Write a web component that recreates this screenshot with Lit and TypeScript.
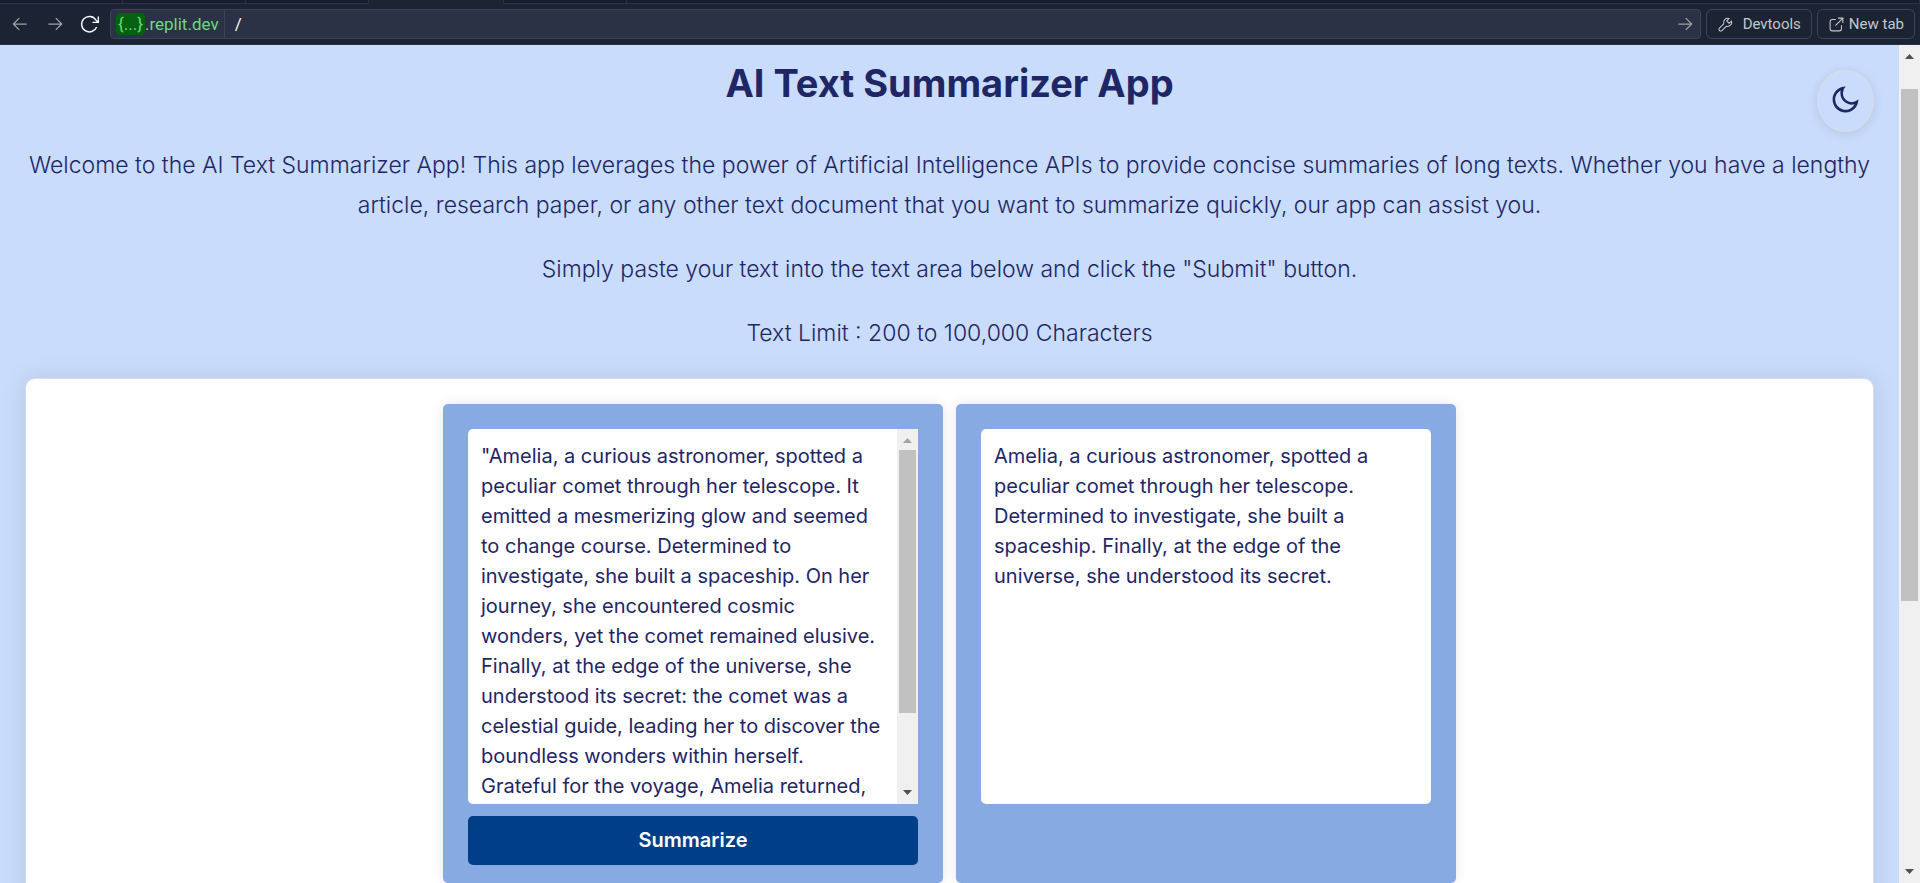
import { LitElement, html, css, svg } from "lit";
import { customElement, property } from "lit/decorators.js";

const STORY =
  '"Amelia, a curious astronomer, spotted a peculiar comet through her telescope. It emitted a mesmerizing glow and seemed to change course. Determined to investigate, she built a spaceship. On her journey, she encountered cosmic wonders, yet the comet remained elusive. Finally, at the edge of the universe, she understood its secret: the comet was a celestial guide, leading her to discover the boundless wonders within herself. Grateful for the voyage, Amelia returned,';

const SUMMARY =
  "Amelia, a curious astronomer, spotted a peculiar comet through her telescope. Determined to investigate, she built a spaceship. Finally, at the edge of the universe, she understood its secret.";

const icon = (name: string, body: unknown) =>
  html`<svg class="icon ${name}" viewBox="0 0 24 24" aria-hidden="true">${body}</svg>`;

@customElement("scroll-track")
export class ScrollTrack extends LitElement {
  @property({ type: Number }) before = 0;
  @property({ type: Number }) thumb = 50;
  @property({ type: Boolean, reflect: true }) start = false;

  static styles = css`
    :host {
      display: flex;
      flex-direction: column;
      flex: none;
      width: 21px;
      background: #f0f0f0;
    }
    .arrow {
      flex: none;
      width: 21px;
      height: 21px;
      fill: #505050;
    }
    :host([start]) .up {
      fill: #a3a3a3;
    }
    .track {
      flex: 1;
      min-height: 0;
      padding: 0 2px;
    }
    .inner {
      display: flex;
      flex-direction: column;
      height: 100%;
    }
    .thumb {
      background: #c1c1c1;
    }
  `;

  render() {
    return html`
      <svg class="arrow up" viewBox="0 0 21 21"><path d="M6 14h9l-4.500-5z" /></svg>
      <div class="track">
        <div class="inner">
          <div style="height:${this.before}%"></div>
          <div class="thumb" style="height:${this.thumb}%"></div>
        </div>
      </div>
      <svg class="arrow" viewBox="0 0 21 21"><path d="M6 7h9l-4.500 5z" /></svg>
    `;
  }
}

@customElement("browser-bar")
export class BrowserBar extends LitElement {
  static styles = css`
    :host {
      display: block;
      flex: none;
      background: #1c2333;
      border-bottom: 1px solid #2b3245;
      font-family: Roboto, "Noto Sans", sans-serif;
      font-size: 15px;
      color: #c2c8cc;
    }
    .tabs {
      display: flex;
      height: 4px;
    }
    .tab {
      box-sizing: border-box;
      width: 123px;
      background: #171d2d;
      border-right: 1px solid #2b3245;
      border-bottom: 1px solid #2b3245;
    }
    .tab.active {
      width: 135px;
      background: none;
      border-bottom: 0;
    }
    .tab.rest {
      flex: 1;
    }
    .bar {
      display: flex;
      align-items: center;
      gap: 5px;
      padding: 5px;
    }
    .nav {
      display: flex;
      gap: 15px;
      padding: 0 5px;
    }
    button,
    a {
      font: inherit;
      color: inherit;
      background: none;
      border: 0;
      padding: 0;
      text-decoration: none;
      display: flex;
      align-items: center;
    }
    .icon {
      display: block;
      width: 20px;
      height: 20px;
      fill: none;
      stroke: #9da2a6;
      stroke-width: 1.5;
    }
    .reload {
      stroke: #f5f9fc;
      stroke-width: 1.7;
    }
    .small {
      width: 17px;
      height: 17px;
      stroke: #c2c8cc;
    }
    .address {
      box-sizing: border-box;
      flex: 1;
      height: 30px;
      display: flex;
      align-items: center;
      background: #2b3245;
      border: 1px solid #3c445c;
      border-radius: 4px;
      padding: 0 5px;
    }
    .host {
      display: flex;
      align-items: center;
      height: 28px;
      padding-right: 5px;
      border-right: 1px solid #3c445c;
      color: #6cd97e;
      font-size: 17px;
    }
    .chip {
      padding: 0 2px;
      line-height: 22px;
      border-radius: 4px;
      background: #056110;
    }
    .path {
      flex: 1;
      min-width: 0;
      border: 0;
      outline: 0;
      background: none;
      color: #f5f9fc;
      font: inherit;
      font-size: 17px;
      padding: 0 10px;
    }
    .tool {
      box-sizing: border-box;
      height: 30px;
      padding: 0 10px;
      border: 1px solid #3c445c;
      border-radius: 6px;
      gap: 9px;
    }
    .tool.link {
      gap: 4px;
    }
  `;

  render() {
    const left = svg`<path d="M20 12H4M11 5l-7 7 7 7" />`;
    const right = svg`<path d="M4 12h16M13 5l7 7-7 7" />`;
    return html`
      <div class="tabs">
        <div class="tab"></div>
        <div class="tab"></div>
        <div class="tab"></div>
        <div class="tab active"></div>
        <div class="tab"></div>
        <div class="tab rest"></div>
      </div>
      <div class="bar">
        <div class="nav">
          <button aria-label="Back">${icon("", left)}</button>
          <button aria-label="Forward">${icon("", right)}</button>
          <button aria-label="Reload">
            ${icon("reload", svg`<path d="M20 15.500a9.300 9.300 0 1 1-1-8.500l2.500 3M22 3v7h-7" />`)}
          </button>
        </div>
        <div class="address">
          <span class="host"><span class="chip">{...}</span>.replit.dev</span>
          <input class="path" aria-label="Path" .value=${"/"} />
          <button aria-label="Go">${icon("", right)}</button>
        </div>
        <button class="tool">
          ${icon("small", svg`<path d="M20.500 7.200 17 10.200l-3.200-3.200L17 3.500a6 6 0 0 0-7.500 7.500L3.500 17a2.300 2.300 0 0 0 3.500 3.500l6-6A6 6 0 0 0 20.500 7.200Z" />`)}
          Devtools
        </button>
        <a class="tool link" href="#">
          ${icon("small", svg`<path d="M11 5H6a3 3 0 0 0-3 3v10a3 3 0 0 0 3 3h10a3 3 0 0 0 3-3v-5M14 3h7v7M21 3 10.500 13.500" />`)}
          New tab
        </a>
      </div>
    `;
  }
}

@customElement("app-root")
export class AppRoot extends LitElement {
  static styles = css`
    :host {
      display: flex;
      flex-direction: column;
      height: 100vh;
      overflow: hidden;
      font-family: Inter, "Noto Sans", sans-serif;
      color: #1f2665;
      background: #c9dcfc;
    }
    .view {
      flex: 1;
      min-height: 0;
      display: flex;
    }
    .page {
      position: relative;
      flex: 1;
      min-width: 0;
      overflow: hidden;
      padding: 12px 25px 0;
      text-align: center;
    }
    h1 {
      margin: 0 0 36px;
      font-size: 38px;
      line-height: 52px;
      font-weight: 700;
    }
    p {
      margin: 0 0 24px;
      font-size: 23px;
      line-height: 40px;
      font-weight: 300;
    }
    .theme {
      position: absolute;
      top: 25px;
      right: 25px;
      box-sizing: border-box;
      width: 57px;
      height: 62px;
      padding: 0 0 4px;
      display: flex;
      align-items: center;
      justify-content: center;
      border: 1px solid #dadce3;
      border-radius: 50%;
      background: #c9dcfc;
      box-shadow: 0 2px 12px rgba(0, 0, 0, 0.1);
    }
    .moon {
      width: 31px;
      height: 31px;
      fill: #1f2665;
    }
    .panel {
      box-sizing: border-box;
      display: flex;
      justify-content: center;
      gap: 13px;
      min-height: 600px;
      margin-top: 25px;
      padding: 25px;
      align-items: flex-start;
      background: #fff;
      border: 1px solid #d9dce4;
      border-radius: 10px;
      box-shadow: 0 0 25px rgba(0, 0, 0, 0.1);
    }
    .card {
      box-sizing: border-box;
      flex: 0 1 500px;
      min-height: 479px;
      padding: 25px 25px 18px;
      border-radius: 5px;
      background: #88aae3;
      box-shadow: 0 0 12px rgba(0, 0, 0, 0.1);
    }
    .field {
      display: flex;
      height: 375px;
      background: #fff;
      border-radius: 5px;
    }
    textarea {
      box-sizing: border-box;
      flex: 1;
      min-width: 0;
      resize: none;
      overflow: hidden;
      border: 0;
      outline: 0;
      background: none;
      padding: 12px 13px 0;
      color: inherit;
      font: 400 20px/30px Inter, "Noto Sans", sans-serif;
    }
    .submit {
      display: block;
      width: 100%;
      margin-top: 12px;
      padding: 0;
      border: 0;
      border-radius: 5px;
      background: #003f88;
      color: #fff;
      font: 600 20px/49px Inter, "Noto Sans", sans-serif;
    }
  `;

  render() {
    return html`
      <browser-bar></browser-bar>
      <div class="view">
        <main class="page">
          <h1>AI Text Summarizer App</h1>
          <button class="theme" aria-label="Toggle dark mode">
            ${icon("moon", svg`<path d="M10 7a7 7 0 0 0 12 4.900v.1c0 5.523-4.477 10-10 10S2 17.523 2 12 6.477 2 12 2h.1A6.980 6.980 0 0 0 10 7zm-6 5a8 8 0 0 0 15.062 3.762A9 9 0 0 1 8.238 4.938 7.999 7.999 0 0 0 4 12z" />`)}
          </button>
          <p>
            Welcome to the AI Text Summarizer App! This app leverages the power of Artificial
            Intelligence APIs to provide concise summaries of long texts. Whether you have a lengthy
            article, research paper, or any other text document that you want to summarize quickly,
            our app can assist you.
          </p>
          <p>Simply paste your text into the text area below and click the "Submit" button.</p>
          <p>Text Limit : 200 to 100,000 Characters</p>
          <div class="panel">
            <section class="card">
              <div class="field">
                <textarea aria-label="Text to summarize" .value=${STORY}></textarea>
                <scroll-track start .before=${0} .thumb=${79}></scroll-track>
              </div>
              <button class="submit">Summarize</button>
            </section>
            <section class="card">
              <div class="field">
                <textarea aria-label="Summary" readonly .value=${SUMMARY}></textarea>
              </div>
            </section>
          </div>
        </main>
        <scroll-track .before=${2.9} .thumb=${64.3}></scroll-track>
      </div>
    `;
  }
}
